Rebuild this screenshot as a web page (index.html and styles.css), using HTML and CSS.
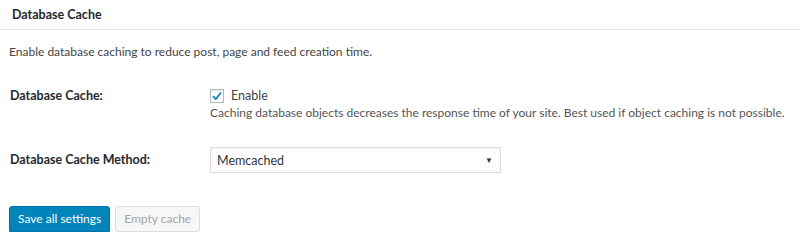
FILE: index.html
```html
<!DOCTYPE html>
<html>
<head>
<meta charset="utf-8">
<link rel="stylesheet" href="styles.css">
</head>
<body>
<div class="box">
  <h3 class="box-title">Database Cache</h3>
  <div class="box-inner">
    <p class="intro">Enable database caching to reduce post, page and feed creation time.</p>
    <div class="form-row row1">
      <div class="label">Database Cache:</div>
      <div class="field">
        <label class="check"><span class="checkbox"><svg width="12" height="12" viewBox="0 0 12 12"><path d="M2 6.3 L4.8 9 L10 2.5" fill="none" stroke="#1e8cbe" stroke-width="2"/></svg></span>Enable</label>
        <div class="help">Caching database objects decreases the response time of your site. Best used if object caching is not possible.</div>
      </div>
    </div>
    <div class="form-row row2">
      <div class="label">Database Cache Method:</div>
      <div class="field">
        <div class="select"><span>Memcached</span><span class="arrow">▼</span></div>
      </div>
    </div>
    <div class="actions">
      <button class="btn primary">Save all settings</button>
      <button class="btn disabled">Empty cache</button>
    </div>
  </div>
</div>
</body>
</html>
```
FILE: styles.css
```css
html, body { margin: 0; padding: 0; background: #fff; }
body { font-family: "Lato", "Liberation Sans", sans-serif; font-size: 12px; color: #444; }
.box-title {
  margin: 0; height: 30px; box-sizing: border-box; padding: 7px 12px 0;
  font-size: 12.5px; font-weight: 700; color: #23282d; line-height: 16px;
  border-bottom: 1px solid #e5e5e5;
}
.box-inner { padding: 0 9px; }
.intro { margin: 13px 0 0; line-height: 18px; }
.form-row { display: grid; grid-template-columns: 201px 1fr; }
.row1 { margin-top: 26px; }
.row2 { margin-top: 25px; }
.label { font-weight: 700; font-size: 12.5px; color: #23282d; line-height: 18px; padding-left: 1px; }
.row2 .label { padding-top: 4px; }
.check { display: flex; align-items: center; gap: 7px; line-height: 18px; color: #444; font-size: 12.5px; }
.checkbox { width: 14px; height: 14px; border: 1px solid #b4b9be; box-sizing: border-box; display: flex; align-items: center; justify-content: center; box-shadow: inset 0 1px 2px rgba(0,0,0,.1); }
.help { line-height: 18px; color: #555; margin-top: -1px; }
.select {
  width: 291px; height: 26px; box-sizing: border-box; border: 1px solid #ddd;
  box-shadow: inset 0 1px 2px rgba(0,0,0,.07);
  display: flex; align-items: center; justify-content: space-between; padding: 0 7px 0 6px;
  color: #32373c; font-size: 12.5px;
}
.arrow { font-size: 8px; color: #333; }
.actions { display: flex; gap: 5px; margin-top: 33px; }
.btn {
  font-family: inherit; font-size: 12px; height: 26px; box-sizing: border-box;
  border-radius: 3px; padding: 0 8px; line-height: 24px; margin: 0;
}
.primary { background: #0085ba; border: 1px solid #0073aa; color: #fff; box-shadow: 0 1px 0 #006799; }
.disabled { background: #f7f7f7; border: 1px solid #ddd; color: #a0a5aa; }
```
